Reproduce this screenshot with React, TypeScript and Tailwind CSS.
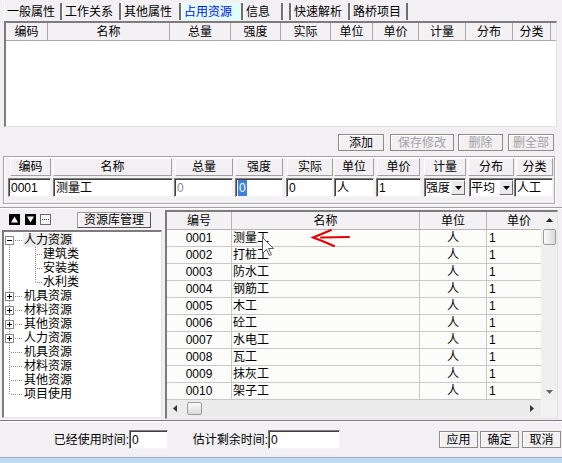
import React from "react";

const tabs: { label: string; w: string; active?: boolean }[] = [
  { label: "一般属性", w: "w-[58px]" },
  { label: "工作关系", w: "w-[59px]" },
  { label: "其他属性", w: "w-[60px]" },
  { label: "占用资源", w: "w-[62px]", active: true },
  { label: "信息", w: "w-[40px]" },
  { label: "", w: "w-[8px]" },
  { label: "快速解析", w: "w-[59px]" },
  { label: "路桥项目", w: "w-[58px]" },
];

const hdrTop: [string, string][] = [
  ["编码", "w-[42px]"],
  ["名称", "w-[122px]"],
  ["总量", "w-[61px]"],
  ["强度", "w-[50px]"],
  ["实际", "w-[50px]"],
  ["单位", "w-[42px]"],
  ["单价", "w-[46px]"],
  ["计量", "w-[47px]"],
  ["分布", "w-[47px]"],
  ["分类", "w-[38px]"],
];

const formLabels: [string, string][] = [
  ["编码", "ml-[6px] w-[41px]"],
  ["名称", "ml-[2px] w-[119px]"],
  ["总量", "ml-[3px] w-[58px]"],
  ["强度", "ml-[2px] w-[48px]"],
  ["实际", "ml-[4px] w-[46px]"],
  ["单位", "ml-[1px] w-[40px]"],
  ["单价", "ml-[3px] w-[43px]"],
  ["计量", "ml-[4px] w-[42px]"],
  ["分布", "ml-[2px] w-[46px]"],
  ["分类", "ml-[2px] w-[37px]"],
];

const sunken =
  "border border-t-[#7f7f7f] border-l-[#7f7f7f] border-r-[#f4f4f4] border-b-[#f4f4f4] shadow-[inset_1px_1px_0_#404040] bg-white";

const rows: [string, string][] = [
  ["0001", "测量工"],
  ["0002", "打桩工"],
  ["0003", "防水工"],
  ["0004", "钢筋工"],
  ["0005", "木工"],
  ["0006", "砼工"],
  ["0007", "水电工"],
  ["0008", "瓦工"],
  ["0009", "抹灰工"],
  ["0010", "架子工"],
];

type TreeKind = "minus" | "plus" | "leaf" | "child";
const tree: { label: string; kind: TreeKind; first?: boolean; last?: boolean; lastChild?: boolean; sel?: boolean }[] = [
  { label: "人力资源", kind: "minus", first: true, sel: true },
  { label: "建筑类", kind: "child" },
  { label: "安装类", kind: "child" },
  { label: "水利类", kind: "child", lastChild: true },
  { label: "机具资源", kind: "plus" },
  { label: "材料资源", kind: "plus" },
  { label: "其他资源", kind: "plus" },
  { label: "人力资源", kind: "plus" },
  { label: "机具资源", kind: "leaf" },
  { label: "材料资源", kind: "leaf" },
  { label: "其他资源", kind: "leaf" },
  { label: "项目使用", kind: "leaf", last: true },
];

const dot = { stroke: "#8a8a8a", strokeWidth: 1, strokeDasharray: "1 1", fill: "none" } as const;

function TreePrefix({ kind, first, last, lastChild }: { kind: TreeKind; first?: boolean; last?: boolean; lastChild?: boolean }) {
  if (kind === "child") {
    return (
      <svg width="39" height="14" className="shrink-0">
        <path d="M5.5 0 V14" {...dot} />
        <path d={lastChild ? "M31.5 0 V8" : "M31.5 0 V14"} {...dot} />
        <path d="M33 7.5 H39" {...dot} />
      </svg>
    );
  }
  if (kind === "leaf") {
    return (
      <svg width="20" height="14" className="shrink-0">
        <path d={last ? "M5.5 0 V8" : "M5.5 0 V14"} {...dot} />
        <path d="M7 7.5 H19" {...dot} />
      </svg>
    );
  }
  return (
    <svg width="20" height="14" className="shrink-0">
      {!first && <path d="M5.5 0 V3" {...dot} />}
      <path d="M5.5 12 V14" {...dot} />
      <rect x="1.5" y="3.5" width="8" height="8" fill="#fff" stroke="#8a8a8a" />
      <path d="M3 7.5 H8" stroke="#000" />
      {kind === "plus" && <path d="M5.5 5 V10" stroke="#000" />}
      <path d="M11 7.5 H19" {...dot} />
    </svg>
  );
}

function Btn({ children, className = "", disabled }: { children: React.ReactNode; className?: string; disabled?: boolean }) {
  return (
    <div
      className={`h-[17px] flex items-center justify-center border border-[#8e8a86] shadow-[inset_1px_1px_0_#ffffff] ${
        disabled ? "text-[#a3a3a3]" : "text-black"
      } ${className}`}
    >
      {children}
    </div>
  );
}

function SelectBox({ value, className }: { value: string; className: string }) {
  return (
    <div className={`${className} h-[19px] flex items-center ${sunken}`}>
      <span className="pl-[1px] flex-1 whitespace-nowrap overflow-hidden">{value}</span>
      <div className="w-[14px] h-[15px] shrink-0 flex items-center justify-center bg-[#ebe9ec] border border-t-white border-l-white border-r-[#6a6a6a] border-b-[#6a6a6a]">
        <svg width="7" height="4">
          <path d="M0 0 H7 L3.5 4 Z" fill="#000" />
        </svg>
      </div>
    </div>
  );
}

export default function App() {
  return (
    <div className="w-[562px] h-[463px] overflow-hidden relative bg-[#f2f0f3] text-[12px] leading-none text-black font-['Liberation_Sans','Noto_Sans_CJK_SC',sans-serif]">
      {/* tabs */}
      <div className="h-[21px] flex items-end pb-[1px] pl-[4px]">
        {tabs.map((t, i) => (
          <div
            key={i}
            className={`${t.w} h-[17px] flex items-center pl-[2px] whitespace-nowrap border-l border-l-white border-r-2 border-r-[#6f6f6f] ${
              t.active ? "bg-[#e2fdfd] text-[#0014e6]" : ""
            }`}
          >
            {t.label}
          </div>
        ))}
      </div>

      {/* top grid */}
      <div className="ml-[4px] w-[553px] h-[106px] flex flex-col bg-white border-t-2 border-l-2 border-t-[#7c7c7c] border-l-[#7c7c7c] border-r border-b border-r-[#e2e2e2] border-b-[#e2e2e2]">
        <div className="flex h-[18px] shrink-0 bg-[#f3f1f4]">
          {hdrTop.map(([t, w]) => (
            <div key={t} className={`${w} h-full flex items-center justify-center border-r border-b border-r-[#a8a8a8] border-b-[#a8a8a8]`}>
              {t}
            </div>
          ))}
          <div className="flex-1 h-full border-b border-b-[#a8a8a8]" />
        </div>
      </div>

      {/* action buttons */}
      <div className="flex mt-[7px] pl-[338px]">
        <Btn className="w-[46px]">添加</Btn>
        <Btn className="w-[64px] ml-[6px]" disabled>
          保存修改
        </Btn>
        <Btn className="w-[45px] ml-[4px]" disabled>
          删除
        </Btn>
        <Btn className="w-[46px] ml-[5px]" disabled>
          删全部
        </Btn>
      </div>

      {/* edit group */}
      <div className="ml-[3px] mt-[5px] w-[552px] h-[48px] border border-[#a6a6a6] shadow-[inset_1px_1px_0_#ffffff,1px_1px_0_#ffffff]">
        <div className="flex mt-[1px] h-[18px]">
          {formLabels.map(([t, c]) => (
            <div key={t} className={`${c} h-full flex items-center justify-center border border-t-white border-l-white border-r-[#a0a0a0] border-b-[#a0a0a0]`}>
              {t}
            </div>
          ))}
        </div>
        <div className="flex mt-[2px] h-[19px]">
          <div className={`ml-[4px] w-[43px] h-full flex items-center pl-[2px] ${sunken}`}>0001</div>
          <div className={`ml-[2px] w-[120px] h-full flex items-center pl-[2px] ${sunken}`}>测量工</div>
          <div className={`ml-[1px] w-[59px] h-full flex items-center pl-[2px] text-[#8a8a8a] ${sunken}`}>0</div>
          <div className={`ml-[2px] w-[48px] h-full flex items-center pl-[2px] ${sunken}`}>
            <span className="bg-[#3b82de] text-white px-[1px] py-[2px]">0</span>
          </div>
          <div className={`ml-[3px] w-[47px] h-full flex items-center pl-[2px] ${sunken}`}>0</div>
          <div className={`ml-[1px] w-[40px] h-full flex items-center pl-[2px] ${sunken}`}>人</div>
          <div className={`ml-[2px] w-[45px] h-full flex items-center pl-[2px] ${sunken}`}>1</div>
          <SelectBox value="强度" className="ml-[3px] w-[42px]" />
          <SelectBox value="平均" className="ml-[3px] w-[45px]" />
          <div className={`w-[39px] h-full flex items-center pl-[2px] ${sunken}`}>人工</div>
        </div>
      </div>

      {/* separator */}
      <div className="mt-[3px] h-[2px] border-t border-t-[#a0a0a0] border-b border-b-white" />

      {/* main lower area */}
      <div className="flex h-[210px]">
        {/* left panel */}
        <div className="ml-[2px] w-[160px] flex flex-col">
          <div className="h-[21px] flex items-center">
            <div className="ml-[7px] w-[11px] h-[11px] border border-black bg-white flex items-center justify-center">
              <svg width="9" height="9">
                <rect x="0" y="0" width="9" height="9" fill="#000" />
                <path d="M4.5 1.5 L8 7.5 H1 Z" fill="#fff" />
              </svg>
            </div>
            <div className="ml-[5px] w-[11px] h-[11px] border border-black bg-white flex items-center justify-center">
              <svg width="9" height="9">
                <rect x="0" y="0" width="9" height="9" fill="#000" />
                <path d="M1 1.5 H8 L4.5 7.5 Z" fill="#fff" />
              </svg>
            </div>
            <div className="ml-[4px] w-[11px] h-[11px] border border-[#6a6a6a] bg-[#f6f6f6] flex items-center justify-center">
              <svg width="9" height="9">
                <path d="M1 4.5 H8" stroke="#444" strokeDasharray="1 1" />
              </svg>
            </div>
            <div className="ml-[26px] w-[74px] h-[16px] flex items-center justify-center border border-[#9a9a9a] border-r-[#555] border-b-[#555] shadow-[inset_1px_1px_0_#ffffff]">
              资源库管理
            </div>
          </div>
          <div className="h-[188px] bg-white border-t-2 border-l-2 border-t-[#7c7c7c] border-l-[#7c7c7c] border-r border-b border-r-[#e2e2e2] border-b-[#e2e2e2] pt-[1px]">
            {tree.map((r, i) => (
              <div key={i} className="h-[14px] flex items-center leading-[14px]">
                <TreePrefix kind={r.kind} first={r.first} last={r.last} lastChild={r.lastChild} />
                <span className={r.sel ? "bg-[#ececec] px-[1px] -ml-[1px]" : ""}>{r.label}</span>
              </div>
            ))}
          </div>
        </div>

        {/* right grid */}
        <div className="ml-[3px] mt-[1px] w-[393px] h-[209px] flex border-t-2 border-l-2 border-t-[#7c7c7c] border-l-[#7c7c7c] border-r border-b border-r-[#e2e2e2] border-b-[#e2e2e2]">
          <div className="w-[374px] flex flex-col">
            <div className="flex h-[18px] bg-[#f3f1f4]">
              <div className="w-[65px] flex items-center justify-center border-r border-b border-[#b4b4b4]">编号</div>
              <div className="w-[188px] flex items-center justify-center border-r border-b border-[#b4b4b4]">名称</div>
              <div className="w-[67px] flex items-center justify-center border-r border-b border-[#b4b4b4]">单位</div>
              <div className="w-[54px] flex items-center justify-center pl-[10px] border-b border-[#b4b4b4]">单价</div>
            </div>
            {rows.map(([code, name]) => (
              <div key={code} className="flex h-[17px] bg-[#fcfdfb]">
                <div className="w-[65px] flex items-center justify-center border-r border-b border-[#c8c8c8]">{code}</div>
                <div className="w-[188px] flex items-center pl-[1px] border-r border-b border-[#c8c8c8]">{name}</div>
                <div className="w-[67px] flex items-center justify-center border-r border-b border-[#c8c8c8]">人</div>
                <div className="w-[54px] flex items-center pl-[2px] border-b border-[#c8c8c8]">1</div>
              </div>
            ))}
            <div className="h-[17px] flex items-center bg-[#ececec]">
              <svg width="4" height="7" className="ml-[6px]">
                <path d="M4 0 V7 L0 3.5 Z" fill="#333" />
              </svg>
              <div className="ml-[10px] w-[15px] h-[13px] rounded-[2px] border border-[#9c9c9c] bg-gradient-to-b from-[#fbfbfb] to-[#dadada]" />
              <div className="flex-1" />
              <svg width="4" height="7" className="mr-[7px]">
                <path d="M0 0 V7 L4 3.5 Z" fill="#333" />
              </svg>
            </div>
          </div>
          <div className="w-[16px] flex flex-col">
            <div className="h-[188px] bg-[#efefef] flex flex-col items-center">
              <div className="h-[16px] flex items-center justify-center">
                <svg width="7" height="4">
                  <path d="M0 4 H7 L3.5 0 Z" fill="#222" />
                </svg>
              </div>
              <div className="mt-[1px] w-[13px] h-[16px] rounded-[2px] border border-[#9c9c9c] bg-gradient-to-r from-[#fbfbfb] to-[#dadada]" />
              <div className="flex-1" />
              <div className="h-[16px] flex items-center justify-center">
                <svg width="7" height="4">
                  <path d="M0 0 H7 L3.5 4 Z" fill="#666" />
                </svg>
              </div>
            </div>
            <div className="h-[17px] bg-[#f2f2f2]" />
          </div>
        </div>
      </div>

      {/* separator */}
      <div className="mt-[1px] h-[2px] border-t border-t-[#7a7a7a] border-b border-b-white" />

      {/* bottom bar */}
      <div className="h-[35px] flex items-center">
        <div className="ml-[50px] w-[79px] text-right whitespace-nowrap">已经使用时间:</div>
        <div className={`w-[39px] h-[19px] flex items-center pl-[2px] ${sunken}`}>0</div>
        <div className="ml-[20px] w-[80px] text-right whitespace-nowrap">估计剩余时间:</div>
        <div className={`w-[72px] h-[19px] flex items-center pl-[2px] ${sunken}`}>0</div>
        <Btn className="ml-[99px] w-[39px]">应用</Btn>
        <Btn className="ml-[2px] w-[39px]">确定</Btn>
        <Btn className="ml-[3px] w-[39px]">取消</Btn>
      </div>

      {/* bottom strip */}
      <div className="h-[6px] border-t border-t-[#9aaec8] bg-[#c3daf4]" />

      {/* red annotation arrow */}
      <svg className="absolute left-[311px] top-[228px]" width="42" height="22">
        <path d="M20 2 Q11 6 2 9.5 Q12 13 23 18" stroke="#e40000" strokeWidth="2" fill="none" strokeLinecap="round" />
        <path d="M10 9.5 L38 9" stroke="#e40000" strokeWidth="2" fill="none" strokeLinecap="round" />
      </svg>

      {/* mouse cursor */}
      <svg className="absolute left-[262px] top-[237px]" width="13" height="20">
        <path d="M0.5 0.5 V16.5 L4.5 12.5 L7.5 18.5 L9.5 17.5 L6.5 11.5 H11.5 Z" fill="#fff" stroke="#555" strokeWidth="1" />
      </svg>
    </div>
  );
}
